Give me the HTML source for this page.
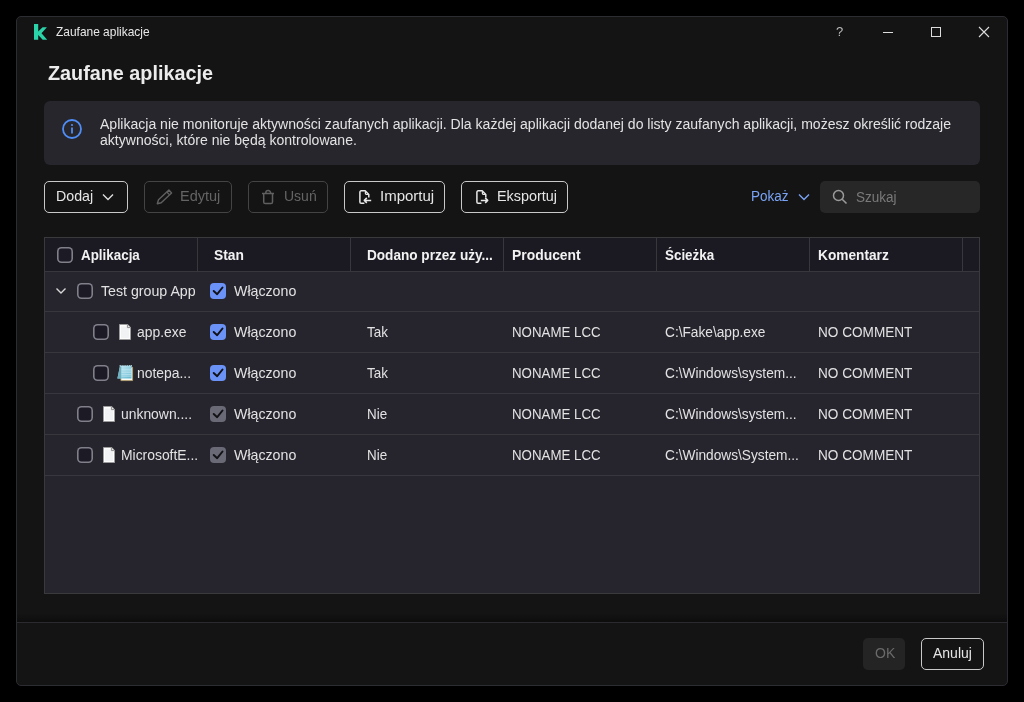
<!DOCTYPE html>
<html><head><meta charset="utf-8">
<style>
*{box-sizing:border-box;margin:0;padding:0}
html,body{width:1024px;height:702px;background:#000;overflow:hidden;font-family:"Liberation Sans",sans-serif;color:#e6e6e6;-webkit-font-smoothing:antialiased}
.abs{position:absolute}
#dlg{position:absolute;left:16px;top:16px;width:992px;height:670px;background:#141414;border:1px solid #2c2c33;border-radius:5px}
.t{position:absolute;white-space:nowrap;line-height:1;will-change:transform}
.sy{transform:scaleY(1.1);transform-origin:0 0}
.btn{position:absolute;top:181px;height:32px;border:1px solid #c9c9c9;border-radius:5px;background:#141414}
.btn.dis{border-color:#444}
.cb{position:absolute;width:16px;height:16px;box-shadow:inset 0 0 0 1.6px #80808a;border-radius:4.5px;background:#1c1b25}
.cbc{position:absolute;width:16px;height:16px;border-radius:4px;background:#6b8ff5}
.cbg{position:absolute;width:16px;height:16px;border-radius:4px;background:#5a5a62}
.hline{position:absolute;height:1px;background:#38373e}
.vline{position:absolute;width:1px;background:#38373e}
</style></head><body>
<div id="dlg"></div>

<!-- title bar -->
<svg class="abs" style="left:32px;top:22px" width="18" height="20" viewBox="0 0 18 20"><path d="M2 2H6.2V9.6L10.6 5.3H14.9L9.5 11.3L15.2 17.7H10.7L6.2 12.9V17.7H2Z" fill="#2ad3a8"/></svg>
<div class="t" style="left:56px;top:27px;font-size:11.95px;color:#e8e8e8">Zaufane aplikacje</div>
<div class="t" style="left:836px;top:25px;font-size:13px;color:#bbb">?</div>
<div class="abs" style="left:883px;top:32px;width:10px;height:1px;background:#ddd"></div>
<div class="abs" style="left:931px;top:27px;width:10px;height:10px;border:1px solid #ddd"></div>
<svg class="abs" style="left:978px;top:26px" width="12" height="12" viewBox="0 0 12 12"><path d="M1 1L11 11M11 1L1 11" stroke="#ddd" stroke-width="1.1"/></svg>

<!-- heading -->
<div class="t" style="left:48px;top:64px;font-size:19.8px;font-weight:700;color:#ececec">Zaufane aplikacje</div>

<!-- info box -->
<div class="abs" style="left:44px;top:101px;width:936px;height:64px;background:#26262c;border-radius:6px"></div>
<svg class="abs" style="left:62px;top:119px" width="20" height="20" viewBox="0 0 20 20"><circle cx="10" cy="10" r="9" fill="none" stroke="#4f8df7" stroke-width="1.8"/><rect x="9.1" y="8.5" width="1.8" height="6" fill="#4f8df7"/><circle cx="10" cy="6" r="1.1" fill="#4f8df7"/></svg>
<div class="t" style="left:100px;top:116px;font-size:14.06px;line-height:16px;color:#e3e3e3">Aplikacja nie monitoruje aktywności zaufanych aplikacji. Dla każdej aplikacji dodanej do listy zaufanych aplikacji, możesz określić rodzaje<br>aktywności, które nie będą kontrolowane.</div>

<!-- toolbar -->
<div class="btn" style="left:44px;width:84px"></div>
<div class="t" style="left:56px;top:189px;font-size:14.2px;color:#e6e6e6">Dodaj</div>
<svg class="abs" style="left:102px;top:193px" width="12" height="8" viewBox="0 0 12 8"><path d="M1 1.5L6 6.5L11 1.5" fill="none" stroke="#ddd" stroke-width="1.4"/></svg>

<div class="btn dis" style="left:144px;width:88px"></div>
<svg class="abs" style="left:152px;top:186px" width="24" height="22" viewBox="0 0 24 22"><path d="M5.3 17.7L6.5 13.8L16.9 4.1L19.6 7L9.2 16.7Z" fill="none" stroke="#606060" stroke-width="1.4" stroke-linejoin="round"/><path d="M14.9 6L17.6 8.9" stroke="#606060" stroke-width="1.3"/></svg>
<div class="t" style="left:180px;top:189px;font-size:14.5px;color:#646464">Edytuj</div>

<div class="btn dis" style="left:248px;width:80px"></div>
<svg class="abs" style="left:256px;top:186px" width="24" height="22" viewBox="0 0 24 22"><path d="M6 7.5H18M9.8 7.5V6.8a2.4 2.2 0 0 1 4.8 0V7.5M7.7 7.5V16a1.6 1.6 0 0 0 1.6 1.6H14.9a1.6 1.6 0 0 0 1.6-1.6V7.5" fill="none" stroke="#606060" stroke-width="1.5"/></svg>
<div class="t" style="left:284px;top:189px;font-size:14px;color:#646464">Usuń</div>

<div class="btn" style="left:344px;width:101px"></div>
<svg class="abs" style="left:354px;top:186px" width="24" height="22" viewBox="0 0 24 22"><path d="M10.4 17.2H7.2a1.3 1.3 0 0 1-1.3-1.3V6.1a1.3 1.3 0 0 1 1.3-1.3H11.2L14.8 8.6V11.6" fill="none" stroke="#e8e8e8" stroke-width="1.5" stroke-linejoin="round"/><path d="M11.4 5.2V7.6a0.8 0.8 0 0 0 0.8 0.8H14.4" fill="none" stroke="#e8e8e8" stroke-width="1.2"/><path d="M17.2 14.4H10.3M12.8 11.9L10.3 14.4L12.8 16.9" fill="none" stroke="#e8e8e8" stroke-width="1.5" stroke-linejoin="round"/></svg>
<div class="t" style="left:380px;top:188px;font-size:15px;color:#e6e6e6">Importuj</div>

<div class="btn" style="left:461px;width:107px"></div>
<svg class="abs" style="left:471px;top:186px" width="24" height="22" viewBox="0 0 24 22"><path d="M10.4 17.2H7.2a1.3 1.3 0 0 1-1.3-1.3V6.1a1.3 1.3 0 0 1 1.3-1.3H11.2L14.8 8.6V11.6" fill="none" stroke="#e8e8e8" stroke-width="1.5" stroke-linejoin="round"/><path d="M11.4 5.2V7.6a0.8 0.8 0 0 0 0.8 0.8H14.4" fill="none" stroke="#e8e8e8" stroke-width="1.2"/><path d="M9.8 14.4H16.7M14.2 11.9L16.7 14.4L14.2 16.9" fill="none" stroke="#e8e8e8" stroke-width="1.5" stroke-linejoin="round"/></svg>
<div class="t" style="left:497px;top:189px;font-size:14.4px;color:#e6e6e6">Eksportuj</div>

<div class="t sy" style="left:751px;top:189px;font-size:13.5px;color:#7aa3f5">Pokaż</div>
<svg class="abs" style="left:798px;top:193px" width="12" height="8" viewBox="0 0 12 8"><path d="M1 1.5L6 6.5L11 1.5" fill="none" stroke="#7aa3f5" stroke-width="1.4"/></svg>
<div class="abs" style="left:820px;top:181px;width:160px;height:32px;background:#272727;border-radius:5px"></div>
<svg class="abs" style="left:832px;top:189px" width="16" height="16" viewBox="0 0 16 16"><circle cx="6.5" cy="6.5" r="5" fill="none" stroke="#9a9a9a" stroke-width="1.5"/><path d="M10.2 10.2L14.5 14.5" stroke="#9a9a9a" stroke-width="1.6"/></svg>
<div class="t" style="left:856px;top:190px;font-size:13.5px;color:#7a7a7a;transform:scaleY(1.08);transform-origin:0 0">Szukaj</div>

<!-- table -->
<div class="abs" style="left:44px;top:237px;width:936px;height:357px;background:#26252e;border:1px solid #3a3a3c"></div>
<div class="abs" style="left:45px;top:238px;width:934px;height:33px;background:#1b1a23"></div>
<div class="hline" style="left:45px;top:271px;width:934px"></div>
<div class="vline" style="left:197px;top:238px;height:33px"></div>
<div class="vline" style="left:350px;top:238px;height:33px"></div>
<div class="vline" style="left:503px;top:238px;height:33px"></div>
<div class="vline" style="left:656px;top:238px;height:33px"></div>
<div class="vline" style="left:809px;top:238px;height:33px"></div>
<div class="vline" style="left:962px;top:238px;height:33px"></div>
<div class="hline" style="left:45px;top:311px;width:934px"></div>
<div class="hline" style="left:45px;top:352px;width:934px"></div>
<div class="hline" style="left:45px;top:393px;width:934px"></div>
<div class="hline" style="left:45px;top:434px;width:934px"></div>
<div class="hline" style="left:45px;top:475px;width:934px"></div>
<div class="cb" style="left:57px;top:247px"></div>
<div class="t sy" style="left:81px;top:248px;font-size:13.4px;font-weight:700;color:#f2f2f2">Aplikacja</div>
<div class="t sy" style="left:214px;top:248px;font-size:13.8px;font-weight:700;color:#f2f2f2">Stan</div>
<div class="t sy" style="left:367px;top:248px;font-size:13.6px;font-weight:700;color:#f2f2f2">Dodano przez uży...</div>
<div class="t sy" style="left:512px;top:248px;font-size:13.9px;font-weight:700;color:#f2f2f2">Producent</div>
<div class="t sy" style="left:665px;top:248px;font-size:13.4px;font-weight:700;color:#f2f2f2">Ścieżka</div>
<div class="t sy" style="left:818px;top:248px;font-size:13.7px;font-weight:700;color:#f2f2f2">Komentarz</div>
<svg class="abs" style="left:55px;top:287px" width="12" height="8" viewBox="0 0 12 8"><path d="M1.5 1.5L6 6L10.5 1.5" fill="none" stroke="#d8d8d8" stroke-width="1.4"/></svg>
<div class="cb" style="left:77px;top:283px"></div>
<div class="t" style="left:101px;top:284px;font-size:14.2px;color:#e2e2e2">Test group App</div>
<svg class="abs" style="left:210px;top:283px" width="16" height="16" viewBox="0 0 16 16"><rect width="16" height="16" rx="4" fill="#6b93f7"/><path d="M3.7 8L7.2 11.2L12.5 4.5" fill="none" stroke="#121216" stroke-width="1.95" stroke-linecap="round" stroke-linejoin="round"/></svg>
<div class="t" style="left:234px;top:284px;font-size:14.2px;color:#e2e2e2">Włączono</div>
<div class="cb" style="left:93px;top:324px"></div>
<svg class="abs" style="left:119px;top:324px" width="12" height="16" viewBox="0 0 12 16"><path d="M0.5 0.5H8.7L11.5 3.3V15.5H0.5Z" fill="#fdfdfd" stroke="#9c9c9c" stroke-width="1"/><rect x="2" y="2.5" width="8" height="11.5" fill="#f1f2f3"/><path d="M8.4 0.8V3.6H11.2" fill="#e4e4e4" stroke="#8e8e8e" stroke-width="1"/></svg>
<div class="t" style="left:137px;top:325px;font-size:13.9px;color:#e2e2e2;transform:scaleY(1.1);transform-origin:0 0">app.exe</div>
<svg class="abs" style="left:210px;top:324px" width="16" height="16" viewBox="0 0 16 16"><rect width="16" height="16" rx="4" fill="#6b93f7"/><path d="M3.7 8L7.2 11.2L12.5 4.5" fill="none" stroke="#121216" stroke-width="1.95" stroke-linecap="round" stroke-linejoin="round"/></svg>
<div class="t" style="left:234px;top:325px;font-size:14.2px;color:#e2e2e2">Włączono</div>
<div class="t" style="left:367px;top:325px;font-size:13.4px;color:#e2e2e2;transform:scaleY(1.1);transform-origin:0 0">Tak</div>
<div class="t" style="left:512px;top:325px;font-size:13.3px;color:#e2e2e2;transform:scaleY(1.1);transform-origin:0 0">NONAME LCC</div>
<div class="t" style="left:665px;top:325px;font-size:13.7px;color:#e2e2e2;transform:scaleY(1.1);transform-origin:0 0">C:\Fake\app.exe</div>
<div class="t" style="left:818px;top:325px;font-size:13.6px;color:#e2e2e2;transform:scaleY(1.1);transform-origin:0 0">NO COMMENT</div>
<div class="cb" style="left:93px;top:365px"></div>
<svg class="abs" style="left:114px;top:362px" width="22" height="22" viewBox="0 0 22 22"><defs><linearGradient id="ng" x1="0" y1="0" x2="1" y2="1"><stop offset="0" stop-color="#d2eef6"/><stop offset="0.55" stop-color="#8dcde0"/><stop offset="1" stop-color="#5fb6cd"/></linearGradient></defs><path d="M6.9 5.2H18.6V18.6H6.9Z" fill="#fbfbf6" stroke="#b39a63" stroke-width="0.8"/><path d="M6 4H17.5V16.6H3.4Z" fill="url(#ng)"/><path d="M6 4L7.4 4.6L7.2 16.6H3.4Z" fill="#6fb0c0"/><path d="M7.4 7.3H17.4M7.4 9H17.4M7.4 10.7H17.4M7.4 12.4H17.4M7.4 14.1H17.4" stroke="#c0e7f1" stroke-width="0.8"/><path d="M6.2 4.4V3.1M8.1 4.4V3.1M10 4.4V3.1M11.9 4.4V3.1M13.8 4.4V3.1M15.7 4.4V3.1M17.3 4.4V3.1" stroke="#b7e3ef" stroke-width="1.1"/></svg>
<div class="t" style="left:137px;top:366px;font-size:13.9px;color:#e2e2e2;transform:scaleY(1.1);transform-origin:0 0">notepa...</div>
<svg class="abs" style="left:210px;top:365px" width="16" height="16" viewBox="0 0 16 16"><rect width="16" height="16" rx="4" fill="#6b93f7"/><path d="M3.7 8L7.2 11.2L12.5 4.5" fill="none" stroke="#121216" stroke-width="1.95" stroke-linecap="round" stroke-linejoin="round"/></svg>
<div class="t" style="left:234px;top:366px;font-size:14.2px;color:#e2e2e2">Włączono</div>
<div class="t" style="left:367px;top:366px;font-size:13.4px;color:#e2e2e2;transform:scaleY(1.1);transform-origin:0 0">Tak</div>
<div class="t" style="left:512px;top:366px;font-size:13.3px;color:#e2e2e2;transform:scaleY(1.1);transform-origin:0 0">NONAME LCC</div>
<div class="t" style="left:665px;top:366px;font-size:13.7px;color:#e2e2e2;transform:scaleY(1.1);transform-origin:0 0">C:\Windows\system...</div>
<div class="t" style="left:818px;top:366px;font-size:13.6px;color:#e2e2e2;transform:scaleY(1.1);transform-origin:0 0">NO COMMENT</div>
<div class="cb" style="left:77px;top:406px"></div>
<svg class="abs" style="left:103px;top:406px" width="12" height="16" viewBox="0 0 12 16"><path d="M0.5 0.5H8.7L11.5 3.3V15.5H0.5Z" fill="#fdfdfd" stroke="#9c9c9c" stroke-width="1"/><rect x="2" y="2.5" width="8" height="11.5" fill="#f1f2f3"/><path d="M8.4 0.8V3.6H11.2" fill="#e4e4e4" stroke="#8e8e8e" stroke-width="1"/></svg>
<div class="t" style="left:121px;top:407px;font-size:13.9px;color:#e2e2e2;transform:scaleY(1.1);transform-origin:0 0">unknown....</div>
<svg class="abs" style="left:210px;top:406px" width="16" height="16" viewBox="0 0 16 16"><rect width="16" height="16" rx="4" fill="#696a75"/><path d="M3.7 8L7.2 11.2L12.5 4.5" fill="none" stroke="#121216" stroke-width="1.95" stroke-linecap="round" stroke-linejoin="round"/></svg>
<div class="t" style="left:234px;top:407px;font-size:14.2px;color:#e2e2e2">Włączono</div>
<div class="t" style="left:367px;top:407px;font-size:13.4px;color:#e2e2e2;transform:scaleY(1.1);transform-origin:0 0">Nie</div>
<div class="t" style="left:512px;top:407px;font-size:13.3px;color:#e2e2e2;transform:scaleY(1.1);transform-origin:0 0">NONAME LCC</div>
<div class="t" style="left:665px;top:407px;font-size:13.7px;color:#e2e2e2;transform:scaleY(1.1);transform-origin:0 0">C:\Windows\system...</div>
<div class="t" style="left:818px;top:407px;font-size:13.6px;color:#e2e2e2;transform:scaleY(1.1);transform-origin:0 0">NO COMMENT</div>
<div class="cb" style="left:77px;top:447px"></div>
<svg class="abs" style="left:103px;top:447px" width="12" height="16" viewBox="0 0 12 16"><path d="M0.5 0.5H8.7L11.5 3.3V15.5H0.5Z" fill="#fdfdfd" stroke="#9c9c9c" stroke-width="1"/><rect x="2" y="2.5" width="8" height="11.5" fill="#f1f2f3"/><path d="M8.4 0.8V3.6H11.2" fill="#e4e4e4" stroke="#8e8e8e" stroke-width="1"/></svg>
<div class="t" style="left:121px;top:448px;font-size:13.9px;color:#e2e2e2;transform:scaleY(1.1);transform-origin:0 0">MicrosoftE...</div>
<svg class="abs" style="left:210px;top:447px" width="16" height="16" viewBox="0 0 16 16"><rect width="16" height="16" rx="4" fill="#696a75"/><path d="M3.7 8L7.2 11.2L12.5 4.5" fill="none" stroke="#121216" stroke-width="1.95" stroke-linecap="round" stroke-linejoin="round"/></svg>
<div class="t" style="left:234px;top:448px;font-size:14.2px;color:#e2e2e2">Włączono</div>
<div class="t" style="left:367px;top:448px;font-size:13.4px;color:#e2e2e2;transform:scaleY(1.1);transform-origin:0 0">Nie</div>
<div class="t" style="left:512px;top:448px;font-size:13.3px;color:#e2e2e2;transform:scaleY(1.1);transform-origin:0 0">NONAME LCC</div>
<div class="t" style="left:665px;top:448px;font-size:13.7px;color:#e2e2e2;transform:scaleY(1.1);transform-origin:0 0">C:\Windows\System...</div>
<div class="t" style="left:818px;top:448px;font-size:13.6px;color:#e2e2e2;transform:scaleY(1.1);transform-origin:0 0">NO COMMENT</div>

<!-- footer -->
<div class="abs" style="left:17px;top:613px;width:990px;height:9px;background:linear-gradient(to bottom,rgba(0,0,0,0),rgba(0,0,0,0.35))"></div>
<div class="hline" style="left:17px;top:622px;width:990px;background:#2a2a2f"></div>
<div class="abs" style="left:863px;top:638px;width:42px;height:32px;background:#242424;border-radius:5px"></div>
<div class="t sy" style="left:875px;top:645px;font-size:14px;color:#6a6a6a">OK</div>
<div class="btn" style="left:921px;top:638px;width:63px"></div>
<div class="t sy" style="left:933px;top:645px;font-size:14px;color:#e6e6e6">Anuluj</div>
</body></html>
